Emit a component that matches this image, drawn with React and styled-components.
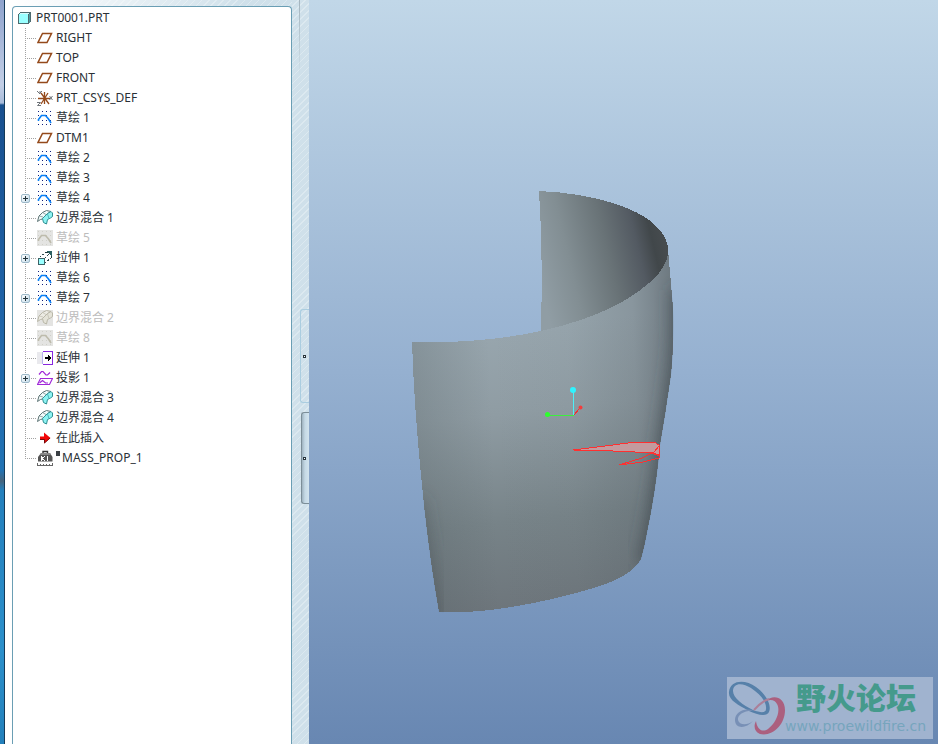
import React, { useState } from "react";
import styled, { createGlobalStyle } from "styled-components";

const treeItems = [
  { id: "right", icon: "plane", label: "RIGHT" },
  { id: "top", icon: "plane", label: "TOP" },
  { id: "front", icon: "plane", label: "FRONT" },
  { id: "csys", icon: "csys", label: "PRT_CSYS_DEF" },
  { id: "sketch1", icon: "sketch", label: "草绘 1" },
  { id: "dtm1", icon: "plane", label: "DTM1" },
  { id: "sketch2", icon: "sketch", label: "草绘 2" },
  { id: "sketch3", icon: "sketch", label: "草绘 3" },
  { id: "sketch4", icon: "sketch", label: "草绘 4", expandable: true },
  { id: "blend1", icon: "blend", label: "边界混合 1" },
  { id: "sketch5", icon: "sketch", label: "草绘 5", suppressed: true },
  { id: "extrude1", icon: "extrude", label: "拉伸 1", expandable: true },
  { id: "sketch6", icon: "sketch", label: "草绘 6" },
  { id: "sketch7", icon: "sketch", label: "草绘 7", expandable: true },
  { id: "blend2", icon: "blend", label: "边界混合 2", suppressed: true },
  { id: "sketch8", icon: "sketch", label: "草绘 8", suppressed: true },
  { id: "extend1", icon: "extend", label: "延伸 1" },
  { id: "project1", icon: "project", label: "投影 1", expandable: true },
  { id: "blend3", icon: "blend", label: "边界混合 3" },
  { id: "blend4", icon: "blend", label: "边界混合 4" },
  { id: "insert", icon: "insert", label: "在此插入" },
  { id: "mass", icon: "mass", label: "MASS_PROP_1", marked: true },
];

function PartIcon() {
  return (
    <svg width="13" height="14" viewBox="0 0 13 14" shapeRendering="crispEdges">
      <path d="M0 3L3 1H13V11L10 13H0z" fill="#4d6b70" />
      <path d="M1 3L3 2H11L10 3z" fill="#d8fbfb" />
      <path d="M11 3L12 2V11L11 12z" fill="#4b9b9f" />
      <rect x="1" y="3" width="9" height="9" fill="#99ffff" />
    </svg>
  );
}

function PlaneIcon() {
  return (
    <path
      d="M5.5 3.5H14.5L10 12.5H1z"
      fill="none"
      stroke="#94491a"
      strokeWidth="1.5"
    />
  );
}

function CsysIcon() {
  return (
    <g fill="none">
      <path
        d="M1 8.5H13M4 3L12 14M11 3L4 14M7.500 2V14"
        stroke="#94491a"
        strokeWidth="1.3"
      />
      <path
        d="M0 1L3 4V1M5 1L2 4M12.500 6L15.500 10M15.500 6L12.500 10M0 12.500H3.500L.5 15.500H4"
        stroke="#70757a"
        strokeWidth="1"
      />
    </g>
  );
}

function SketchIcon({ suppressed }) {
  const steps = [1, 5, 9, 13];
  const rows = [1, 5, 10, 14];
  return (
    <g>
      {rows.map((y) =>
        steps.map((x) => (
          <rect
            key={`${x}-${y}`}
            x={x}
            y={y}
            width="1"
            height="1"
            fill={suppressed ? "#cfcfc8" : "#10207c"}
          />
        ))
      )}
      <path
        d="M1.5 11V9.5L4.5 5.5H8.5L11.5 9L14 13"
        fill="none"
        stroke={suppressed ? "#bdbbac" : "#0a80f5"}
        strokeWidth="1.6"
      />
    </g>
  );
}

function BlendIcon({ suppressed }) {
  const line = suppressed ? "#b9b7a8" : "#5d7475";
  return (
    <g strokeWidth="1" strokeLinejoin="round">
      <path
        d="M.5 11.5L2 6L5.500 2.500L9.500 .5L14 1.500L10 4L5.500 9L3.500 9.500z"
        fill={suppressed ? "#ecebe4" : "#f2fafa"}
        stroke={line}
      />
      <path d="M2.500 6L6 7M5.500 2.500L9 4.500" fill="none" stroke={line} strokeOpacity="0.6" />
      <path
        d="M5.500 8.500L10.500 3.500L14 1.500L15.500 3V6.500L13.500 8L10.500 9.500L9.500 14L6.500 12.500z"
        fill={suppressed ? "#e4e3d8" : "#8df3f2"}
        stroke={suppressed ? "#b9b7a8" : "#2f8f92"}
      />
      <path
        d="M10.500 4L12 8.500"
        fill="none"
        stroke={suppressed ? "#c9c7ba" : "#4cb2b4"}
      />
    </g>
  );
}

function ExtrudeIcon() {
  return (
    <g shapeRendering="crispEdges">
      <rect x="1.500" y="8.500" width="6" height="6" fill="#99ffff" stroke="#3e6266" />
      <path d="M8 2.500H14V9" fill="none" stroke="#20383a" strokeDasharray="3 1" />
      <path d="M3 7L8 3M8 13L14 8M8 8L13 3" fill="none" stroke="#354c50" strokeDasharray="2 1" />
      <path d="M10 1H15V7z" fill="#2c6061" />
    </g>
  );
}

function ExtendIcon() {
  return (
    <g shapeRendering="crispEdges">
      <rect x="0" y="2" width="5" height="12" fill="#e9e9ed" />
      <path d="M5.500 2V14" stroke="#b8b1ee" />
      <path d="M6 1.500H15.500V14.500H6" fill="none" stroke="#8927e0" />
      <path d="M8 7H11V5L14 8L11 11V9H8z" fill="#000" />
    </g>
  );
}

function ProjectIcon() {
  return (
    <g fill="none" stroke="#a128d8" strokeWidth="1.2">
      <path d="M2 4.500L4.500 1.500H6L9 5H10.500L13 2.500" />
      <path d="M3.500 8.500H15.500L12.500 14.500H.5z" />
      <path d="M2.500 13L5.500 10.500L8.500 13H11" />
    </g>
  );
}

function InsertIcon() {
  return (
    <g>
      <path d="M3 6.500H7V2.500L13.500 8L7 13.500V9.500H3z" fill="#f10707" />
      <path d="M3 9.500H7.500V13L13 8" fill="none" stroke="#760b0b" />
    </g>
  );
}

function MassIcon() {
  return (
    <g>
      <path d="M6 3V1.500H10.500V3" fill="none" stroke="#333" strokeWidth="1.4" />
      <path d="M4 3H13L15.500 7V11.500H1V7z" fill="#555" />
      <path d="M4 3H13L14 5H3z" fill="#888" />
      <path
        d="M4.500 6V11M8 6L5 8.500L8 11M10.500 6V11"
        fill="none"
        stroke="#fff"
        shapeRendering="crispEdges"
      />
      <path
        d="M.5 13V15.500H15.500V13M3.500 14V15M6.500 14V15M9.500 14V15M12.500 14V15"
        fill="none"
        stroke="#666"
        shapeRendering="crispEdges"
      />
    </g>
  );
}

const icons = {
  plane: PlaneIcon,
  csys: CsysIcon,
  sketch: SketchIcon,
  blend: BlendIcon,
  extrude: ExtrudeIcon,
  extend: ExtendIcon,
  project: ProjectIcon,
  insert: InsertIcon,
  mass: MassIcon,
};

function TreeItem({ item, last }) {
  const [open, setOpen] = useState(false);
  const Icon = icons[item.icon];
  return (
    <Row>
      <Gutter $last={last}>
        {item.expandable && (
          <Expander
            type="button"
            aria-label={`${open ? "Collapse" : "Expand"} ${item.label}`}
            aria-expanded={open}
            onClick={() => setOpen(!open)}
          />
        )}
      </Gutter>
      <IconBox viewBox="0 0 16 16" $suppressed={item.suppressed}>
        <Icon suppressed={item.suppressed} />
      </IconBox>
      {item.marked && <Marker />}
      <Label $suppressed={item.suppressed}>{item.label}</Label>
    </Row>
  );
}

const OUTER =
  "M412 342Q480 344 541 331Q625 312 659 273Q669 260 668 249Q670 272 673 308Q674 345 671 375L665 415L660 445Q656 490 648 527Q645 545 641 559C635 571 616 582 590 589C550 601 485 615 439 612Q428 550 421 475Q414 405 412 342Z";
const INNER =
  "M539 191C590 193 638 207 656 226Q668 238 668 249Q669 260 659 273Q625 312 541 331Q543 255 539 191Z";

function Scene() {
  return (
    <SceneSvg viewBox="309 0 629 744" role="img" aria-label="Curved surface model">
      <defs>
        <linearGradient id="outer" gradientUnits="userSpaceOnUse" x1="490" y1="330" x2="520" y2="612">
          <stop offset="0" stopColor="#98a6ae" />
          <stop offset="0.3" stopColor="#8f9ca3" />
          <stop offset="0.68" stopColor="#778388" />
          <stop offset="1" stopColor="#6d757b" />
        </linearGradient>
        <linearGradient id="side" gradientUnits="userSpaceOnUse" x1="412" y1="400" x2="675" y2="390">
          <stop offset="0" stopColor="#4c585c" stopOpacity="0.25" />
          <stop offset="0.3" stopColor="#4c585c" stopOpacity="0" />
          <stop offset="0.6" stopColor="#4c585c" stopOpacity="0.03" />
          <stop offset="0.85" stopColor="#4c555c" stopOpacity="0.2" />
          <stop offset="1" stopColor="#444d54" stopOpacity="0.5" />
        </linearGradient>
        <linearGradient id="inner" gradientUnits="userSpaceOnUse" x1="540" y1="280" x2="668" y2="250">
          <stop offset="0" stopColor="#909da4" />
          <stop offset="0.25" stopColor="#828e93" />
          <stop offset="0.55" stopColor="#697377" />
          <stop offset="0.78" stopColor="#535a62" />
          <stop offset="0.9" stopColor="#41474a" />
          <stop offset="1" stopColor="#474c4f" />
        </linearGradient>
        <clipPath id="outerClip">
          <path d={OUTER} />
        </clipPath>
        <filter id="soft" x="-50%" y="-20%" width="200%" height="140%">
          <feGaussianBlur stdDeviation="8" />
        </filter>
      </defs>
      <g shapeRendering="crispEdges">
        <path d={INNER} fill="url(#inner)" />
        <path d={OUTER} fill="url(#outer)" />
        <path d={OUTER} fill="url(#side)" />
      </g>
      <g clipPath="url(#outerClip)">
        <path
          d="M680 290Q682 345 676 380L666 450Q660 500 646 565"
          fill="none"
          stroke="#3c454c"
          strokeWidth="16"
          strokeOpacity="0.75"
          filter="url(#soft)"
        />
        <path
          d="M414 500Q424 560 434 620"
          fill="none"
          stroke="#4a5258"
          strokeWidth="18"
          strokeOpacity="0.5"
          filter="url(#soft)"
        />
      </g>

      <g fill="none" stroke="#ff3030" shapeRendering="crispEdges">
        <path
          d="M573 450L581 449L613 445L635 442H654L659 445V456L652 453L635 452L613 451z"
          fill="#c39a9e"
        />
        <path d="M659 446L654 452L642 458L619 465L643 462L659 458V445M652 453L659 455" />
      </g>

      <g fill="none" shapeRendering="crispEdges">
        <path d="M573.5 392V415" stroke="#4cf0f8" />
        <path d="M549 415.500H574" stroke="#3cf03c" />
        <path d="M574 415L580 408" stroke="#f03030" />
      </g>
      <circle cx="573" cy="390" r="3" fill="#2ef4ff" />
      <circle cx="547.5" cy="414.5" r="2.5" fill="#2dff2d" />
      <circle cx="580.5" cy="407.5" r="2" fill="#f43c3c" />
    </SceneSvg>
  );
}

function ForumLogo() {
  return (
    <svg width="58" height="58" viewBox="0 0 58 58">
      <path
        fillRule="evenodd"
        fill="#5680a9"
        d="M2 13C3 1 18 0 29 8C39 15 45 26 42 33C40 38 30 36 22 32C11 26 1 21 2 13ZM6 12C6 19 16 26 26 31C34 34 39 34 39 30C40 23 33 15 24 9C15 3 6 4 6 12Z"
      />
      <path
        fillRule="evenodd"
        fill="#ab607f"
        d="M39 22C46 15 58 18 58 31C58 46 45 58 33 55C28 53 26 48 29 42C30 50 35 54 41 50C49 44 54 32 50 25C48 21 44 20 39 22Z"
      />
      <path
        fillRule="evenodd"
        fill="#7890b6"
        d="M27 32C18 31 10 36 11 41C12 46 20 47 26 42C19 50 8 50 8 41C8 33 18 28 27 32Z"
      />
      <path d="M27 31Q35 22 42 20" fill="none" stroke="#ab7f98" strokeWidth="2" />
    </svg>
  );
}

function App() {
  return (
    <>
      <GlobalStyle />
      <Page>
        <DesktopEdge />
        <Sidebar>
          <TreePanel aria-label="Model tree">
            <RootRow>
              <PartIcon />
              <Label>PRT0001.PRT</Label>
            </RootRow>
            <TreeList>
              {treeItems.map((item, index) => (
                <TreeItem
                  key={item.id}
                  item={item}
                  last={index === treeItems.length - 1}
                />
              ))}
            </TreeList>
          </TreePanel>
          <Splitter>
            <SplitterLine />
            <SplitterTab type="button" aria-label="Toggle browser" />
            <SplitterTab type="button" aria-label="Toggle model tree" $pressed />
          </Splitter>
        </Sidebar>
        <Viewport>
          <Scene />
          <Watermark>
            <ForumLogo />
            <WatermarkText>
              <ForumName>野火论坛</ForumName>
              <ForumUrl>www.proewildfire.cn</ForumUrl>
            </WatermarkText>
          </Watermark>
        </Viewport>
      </Page>
    </>
  );
}

export default App;

const GlobalStyle = createGlobalStyle`
  *, *::before {
    box-sizing: border-box;
  }
  body {
    margin: 0;
    font-family: "Noto Sans", "Noto Sans CJK SC", sans-serif;
    font-size: 12px;
    color: #2a3036;
  }
`;
const Page = styled.div`
  display: flex;
  min-height: 100vh;
`;
const DesktopEdge = styled.div`
  flex: none;
  width: 5px;
  border-right: 1px solid #143a58;
  background: linear-gradient(
    #8fa3cd 0,
    #c3cfe6 85px,
    #a9bcda 103px,
    #19508f 105px,
    #1f62a6 300px,
    #2273b4 470px,
    #46647c 481px,
    #2480bd 490px,
    #2c90cb 650px,
    #2380bb 100%
  );
`;
const Sidebar = styled.aside`
  display: flex;
  flex: none;
  width: 304px;
  padding: 6px 0 0 7px;
  background:
    linear-gradient(90deg, #fff 8px, rgba(255, 255, 255, 0) 240px),
    repeating-linear-gradient(135deg, #cfe0ea 0 4px, #dce9f0 4px 5px);
`;
const TreePanel = styled.nav`
  flex: 1;
  padding-top: 1px;
  border: 1px solid #6a9eb4;
  border-bottom: none;
  border-radius: 4px 4px 0 0;
  background: #fff;
`;
const TreeList = styled.ul`
  margin: 0;
  padding: 0;
  list-style: none;
`;
const Row = styled.li`
  display: flex;
  align-items: center;
  height: 20px;
`;
const RootRow = styled.div`
  display: flex;
  align-items: center;
  gap: 5px;
  height: 20px;
  padding-left: 5px;
`;
const Gutter = styled.span`
  display: flex;
  flex: none;
  align-items: center;
  width: 24px;
  height: 20px;
  padding-left: 8px;
  background:
    repeating-linear-gradient(90deg, #a2a2a2 0 1px, transparent 1px 2px) 12px 10px / 11px 1px no-repeat,
    repeating-linear-gradient(#a2a2a2 0 1px, transparent 1px 2px) 12px 0 / 1px
      ${(props) => (props.$last ? "10px" : "20px")} no-repeat;
`;
const Expander = styled.button`
  width: 9px;
  height: 9px;
  padding: 0;
  border: 1px solid #9db9c9;
  border-radius: 2px;
  background:
    linear-gradient(#24343c, #24343c) center / 5px 1px no-repeat,
    linear-gradient(#24343c, #24343c) center / 1px 5px no-repeat,
    linear-gradient(135deg, #fff, #c5dcea);
`;
const IconBox = styled.svg`
  flex: none;
  width: 16px;
  height: 16px;
  background: ${(props) => (props.$suppressed ? "#e4e4e2" : "none")};
`;
const Marker = styled.span`
  align-self: flex-start;
  width: 4px;
  height: 5px;
  margin: 3px 0 0 3px;
  background: #3a3f44;
`;
const Label = styled.span`
  line-height: 20px;
  white-space: nowrap;
  color: ${(props) => (props.$suppressed ? "#bcbcbc" : "#2a3036")};
  ${IconBox} + & {
    margin-left: 3px;
  }
  ${Marker} + & {
    margin-left: 2px;
  }
`;
const Splitter = styled.div`
  display: flex;
  flex: none;
  flex-direction: column;
  align-items: flex-end;
  width: 17px;
  margin-top: -6px;
  background: repeating-linear-gradient(135deg, #cfe0ea 0 4px, #dce9f0 4px 5px);
`;
const SplitterLine = styled.div`
  width: 10px;
  height: 76px;
  margin-bottom: 233px;
  background: linear-gradient(#a3b3bd, rgba(163, 179, 189, 0)) left / 1px 100% no-repeat;
`;
const SplitterTab = styled.button`
  display: flex;
  align-items: center;
  width: ${(props) => (props.$pressed ? "8px" : "9px")};
  height: ${(props) => (props.$pressed ? "92px" : "94px")};
  margin-bottom: 9px;
  padding: 0 0 0 ${(props) => (props.$pressed ? "1px" : "2px")};
  border: 1px solid ${(props) => (props.$pressed ? "#7c8e98" : "#aacde0")};
  border-right: none;
  border-radius: 3px 0 0 3px;
  background: ${(props) =>
    props.$pressed ? "linear-gradient(90deg, #9fb3c0, #c5d9e5 3px, #d3e4ee)" : "transparent"};
  &::before {
    content: "";
    width: 3px;
    height: 3px;
    border: 1px solid #26343c;
    background: #fff;
  }
`;
const Viewport = styled.main`
  position: relative;
  display: flex;
  flex: 1;
  min-width: 0;
  background: linear-gradient(#c1d7e8, #95b0d0 50%, #6887b2);
`;
const SceneSvg = styled.svg`
  display: block;
  width: 100%;
  height: 100vh;
`;
const Watermark = styled.div`
  position: absolute;
  right: 5px;
  bottom: 5px;
  display: flex;
  align-items: center;
  width: 206px;
  height: 62px;
  background: #a0b3cf;
`;
const WatermarkText = styled.div`
  display: flex;
  flex-direction: column;
`;
const ForumName = styled.span`
  padding-left: 11px;
  font-family: "Liberation Sans", "Noto Sans CJK SC", sans-serif;
  font-size: 30px;
  font-weight: 900;
  line-height: 36px;
  color: #459a8c;
`;
const ForumUrl = styled.span`
  font-family: "DejaVu Sans", sans-serif;
  font-size: 14px;
  line-height: 18px;
  color: #76a5bd;
`;
